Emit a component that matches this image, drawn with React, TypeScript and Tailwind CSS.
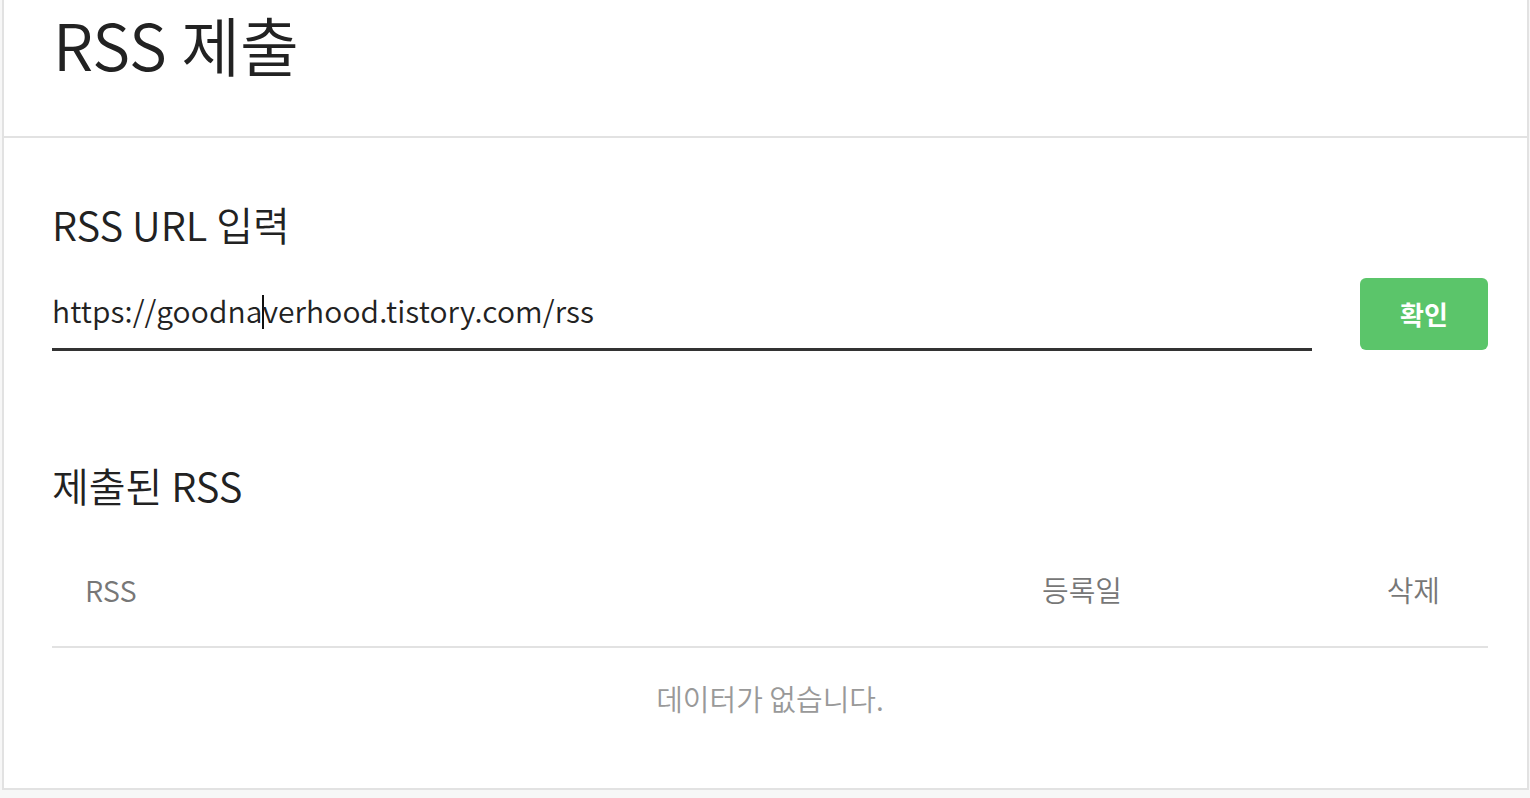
import React from "react";

export default function App() {
  return (
    <div className="min-h-[798px] bg-[#f7f7f7] font-['Noto_Sans_CJK_KR','Noto_Sans',sans-serif] text-[#222]">
      <div className="ml-[2px] w-[1527px] bg-white border-x-2 border-b-2 border-[#e2e2e2]">
        <header className="h-[138px] border-b-2 border-[#e2e2e2] pl-[49px] pt-[11px]">
          <h1 className="text-[64px] leading-none font-[350]">RSS 제출</h1>
        </header>
        <div className="pl-[48px] pr-[39px]">
          <h2 className="mt-[66px] text-[40px] leading-none font-[350]">RSS URL 입력</h2>
          <div className="mt-[34px] flex items-start">
            <div className="w-[1260px] h-[73px] border-b-[3px] border-[#333] pt-[17px] text-[30px] tracking-[0.12px] leading-none whitespace-nowrap font-[350]">
              https://goodna
              <span className="inline-block w-[2px] h-[34px] -mx-[1px] bg-[#111] align-[-6px]" />
              verhood.tistory.com/rss
            </div>
            <button className="ml-auto w-[128px] h-[72px] rounded-[6px] bg-[#5bc56a] text-white text-[26px] font-bold leading-none">
              확인
            </button>
          </div>
          <h2 className="mt-[114px] text-[40px] leading-none font-[350]">제출된 RSS</h2>
          <div className="mt-[46px]">
            <div className="flex pt-[24px] pb-[42px] border-b-2 border-[#e2e2e2] text-[29px] leading-none text-[#777] font-[350]">
              <div className="flex-1 pl-[33px]">RSS</div>
              <div className="w-[200px] text-center">등록일</div>
              <div className="w-[306px] text-right pr-[48px]">삭제</div>
            </div>
            <div className="pt-[36px] pb-[75px] text-center text-[29px] leading-none text-[#999] font-[350]">
              데이터가 없습니다.
            </div>
          </div>
        </div>
      </div>
    </div>
  );
}
